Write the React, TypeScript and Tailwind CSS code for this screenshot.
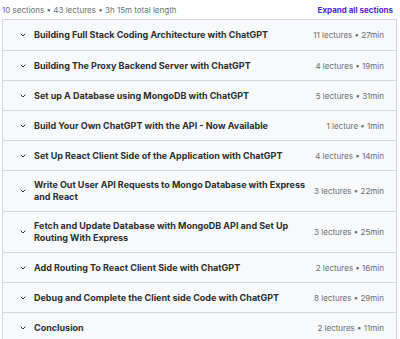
import React from 'react';

type Section = { title: string; meta: string };

const sections: Section[] = [
  { title: 'Building Full Stack Coding Architecture with ChatGPT', meta: '11 lectures • 27min' },
  { title: 'Building The Proxy Backend Server with ChatGPT', meta: '4 lectures • 19min' },
  { title: 'Set up A Database using MongoDB with ChatGPT', meta: '5 lectures • 31min' },
  { title: 'Build Your Own ChatGPT with the API - Now Available', meta: '1 lecture • 1min' },
  { title: 'Set Up React Client Side of the Application with ChatGPT', meta: '4 lectures • 14min' },
  { title: 'Write Out User API Requests to Mongo Database with Express and React', meta: '3 lectures • 22min' },
  { title: 'Fetch and Update Database with MongoDB API and Set Up Routing With Express', meta: '3 lectures • 25min' },
  { title: 'Add Routing To React Client Side with ChatGPT', meta: '2 lectures • 16min' },
  { title: 'Debug and Complete the Client side Code with ChatGPT', meta: '8 lectures • 29min' },
  { title: 'Conclusion', meta: '2 lectures • 11min' },
];

const Chevron = () => (
  <svg width="8" height="8" viewBox="0 0 24 24" fill="none" stroke="#2d2f31" strokeWidth="3" strokeLinecap="round" strokeLinejoin="round" className="shrink-0">
    <path d="M6 9l6 6 6-6" />
  </svg>
);

export default function App() {
  return (
    <div className="w-[400px] bg-white px-[2px] pt-[1px]" style={{ fontFamily: 'Inter, "Noto Sans", sans-serif' }}>
      <div className="flex items-center justify-between h-[18px] pr-[5px]">
        <span className="text-[8px] text-[#6a6f73]">10 sections • 43 lectures • 3h 15m total length</span>
        <button className="text-[8px] font-bold text-[#5624d0]">Expand all sections</button>
      </div>
      <div className="border border-[#d1d7dc] w-[395px]">
        {sections.map((s, i) => (
          <div
            key={i}
            className={`flex items-center bg-[#f7f9fa] min-h-[30px] py-[8px] pl-[16px] pr-[12px] ${i > 0 ? 'border-t border-[#d1d7dc]' : ''}`}
          >
            <Chevron />
            <div className="flex-1 ml-[7px] pr-[2px] text-[9px] font-bold leading-[12px] text-[#2d2f31]">{s.title}</div>
            <div className="text-[8px] text-[#6a6f73] whitespace-nowrap">{s.meta}</div>
          </div>
        ))}
      </div>
    </div>
  );
}
